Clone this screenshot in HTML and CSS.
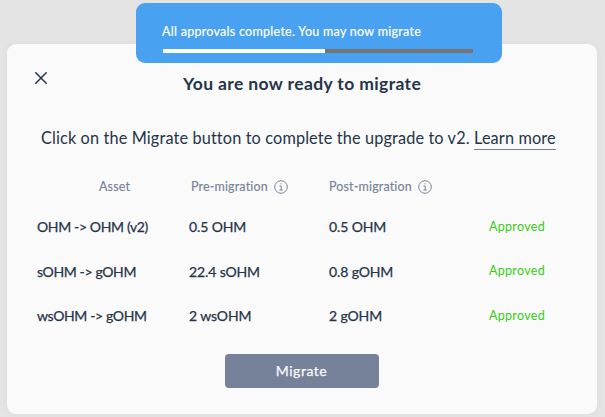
FILE: index.html
```html
<!DOCTYPE html>
<html lang="en">
<head>
<meta charset="utf-8">
<title>Migrate</title>
<link rel="stylesheet" href="styles.css">
</head>
<body>
<div class="toast" role="status">
  <div class="toast-text">All approvals complete. You may now migrate</div>
  <div class="progress"><div class="progress-fill"></div></div>
</div>
<main class="modal">
  <header class="modal-head">
    <svg class="close" viewBox="0 0 12 12"><path d="M.8.8l10.4 10.4M11.2.8L.8 11.2"/></svg>
    <h1><span>You are now ready to migrate</span></h1>
  </header>
  <p class="intro"><span>Click on the Migrate button to complete the upgrade to v2. </span><a class="learn">Learn more</a></p>
  <div class="grid labels">
    <div class="asset-label"><span>Asset</span></div>
    <div class="label"><span>Pre-migration</span><svg class="info" viewBox="0 0 14 14"><circle cx="7" cy="7" r="6.3"/><path d="M5.5 6h1.7v4M5.3 10h3.5M6.4 3.8h1"/></svg></div>
    <div class="label"><span>Post-migration</span><svg class="info" viewBox="0 0 14 14"><circle cx="7" cy="7" r="6.3"/><path d="M5.5 6h1.7v4M5.3 10h3.5M6.4 3.8h1"/></svg></div>
  </div>
  <div class="grid row"><div class="asset"><span>OHM -&gt; OHM (v2)</span></div><div><span>0.5 OHM</span></div><div><span>0.5 OHM</span></div><div class="status"><span>Approved</span></div></div>
  <div class="grid row"><div class="asset"><span>sOHM -&gt; gOHM</span></div><div><span>22.4 sOHM</span></div><div><span>0.8 gOHM</span></div><div class="status"><span>Approved</span></div></div>
  <div class="grid row"><div class="asset"><span>wsOHM -&gt; gOHM</span></div><div><span>2 wsOHM</span></div><div><span>2 gOHM</span></div><div class="status"><span>Approved</span></div></div>
  <button class="migrate">Migrate</button>
</main>
</body>
</html>
```

FILE: styles.css
```css
* { box-sizing: border-box; }
body {
  margin: 0;
  height: 417px;
  overflow: hidden;
  padding: 44px 8px 0 7px;
  background: #e4e4e4;
  color: #253449;
  font-family: Lato, "Liberation Sans", sans-serif;
  white-space: nowrap;
}
.toast {
  position: absolute;
  left: 136px;
  top: 3px;
  width: 366px;
  height: 60px;
  padding: 19px 29px 0 26px;
  border-radius: 9px;
  background: #49a1f2;
  color: #fff;
}
.toast-text { height: 27px; font-size: 12.5px; line-height: 19px; letter-spacing: .28px; -webkit-text-stroke: .2px; }
.progress { height: 4px; margin-left: 1px; background: #757575; }
.progress-fill { width: 162px; height: 4px; background: #fff; }
.modal {
  height: 370px;
  border-radius: 9px;
  background: #fafafa;
  box-shadow: 0 0 8px rgba(0, 0, 0, .04);
}
.modal-head { display: flex; height: 80px; padding: 28px 0 0 28px; }
.close { width: 12px; height: 12px; fill: none; stroke: #253449; stroke-width: 1.5; stroke-linecap: round; }
h1 { margin: 0 0 0 136px; font-size: 17.5px; line-height: 24px; font-weight: 700; letter-spacing: .38px; }
.intro { margin: 0; height: 46px; padding: 3px 0 0 34px; font-size: 16.3px; line-height: 22px; letter-spacing: .13px; }
.intro span { white-space: pre; }
.learn { display: inline-block; height: 23px; border-bottom: 1.5px solid #768299; }
.grid { display: grid; grid-template-columns: 152px 140px 160px 1fr; padding-left: 30px; align-items: center; }
.labels { height: 34px; padding-bottom: 1px; color: #768299; font-size: 12.5px; letter-spacing: .15px; -webkit-text-stroke: .15px; }
.asset-label { padding-left: 62px; }
.label { display: flex; align-items: center; gap: 6px; }
.labels .label:nth-child(2) { padding-left: 2px; }
.info { width: 14px; height: 14px; fill: none; stroke: #768299; stroke-width: 1; }
.row { height: 44.6px; padding-top: 1px; font-size: 14px; letter-spacing: -.12px; -webkit-text-stroke: .25px; }
.asset { letter-spacing: -.36px; }
.status { color: #36cd14; font-size: 12.5px; letter-spacing: .3px; -webkit-text-stroke: 0; padding-bottom: 1px; }
.migrate {
  display: block;
  width: 154px;
  height: 34px;
  margin: 16.5px 0 0 217.5px;
  padding: 0;
  border: 0;
  border-radius: 4px;
  background: #768299;
  color: #fafafa;
  font: 400 14px/34px Lato, "Liberation Sans", sans-serif;
  letter-spacing: .5px;
  -webkit-text-stroke: .25px;
}
```
